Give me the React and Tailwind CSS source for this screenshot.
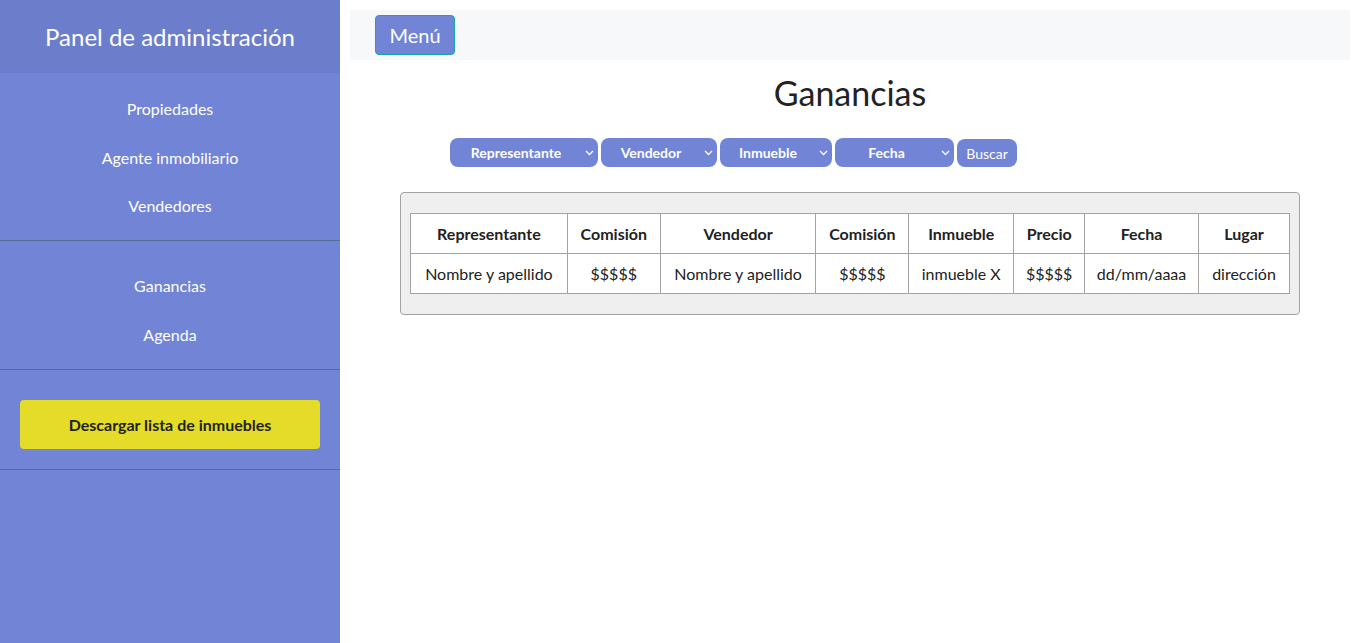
import React from "react";

const navTop = ["Propiedades", "Agente inmobiliario", "Vendedores"];
const navBottom = ["Ganancias", "Agenda"];

const filters = [
  { label: "Representante", w: "w-[148px]" },
  { label: "Vendedor", w: "w-[116px]" },
  { label: "Inmueble", w: "w-[112px]" },
  { label: "Fecha", w: "w-[119px]" },
];

const cols = [
  { head: "Representante", val: "Nombre y apellido", w: "w-[157px]" },
  { head: "Comisión", val: "$$$$$", w: "w-[93px]" },
  { head: "Vendedor", val: "Nombre y apellido", w: "w-[156px]" },
  { head: "Comisión", val: "$$$$$", w: "w-[93px]" },
  { head: "Inmueble", val: "inmueble X", w: "w-[105px]" },
  { head: "Precio", val: "$$$$$", w: "w-[71px]" },
  { head: "Fecha", val: "dd/mm/aaaa", w: "w-[114px]" },
  { head: "Lugar", val: "dirección", w: "w-[91px]" },
];

const Chevron = () => (
  <svg width="9" height="6" viewBox="0 0 9 6" fill="none" stroke="white" strokeWidth="1.3">
    <path d="M1 1l3.5 3.5L8 1" />
  </svg>
);

const App = () => {
  return (
    <div className="flex min-h-[643px] bg-white font-['Lato',sans-serif]">
      {/* Sidebar */}
      <aside className="w-[340px] shrink-0 bg-[#7184d6] text-white">
        <div className="h-[73px] bg-[#6c7ecb] flex items-center justify-center">
          <h1 className="text-[24px] leading-none">Panel de administración</h1>
        </div>
        <nav className="pt-[26px] pb-[24px] flex flex-col items-center gap-[28.5px] text-[16px] leading-[20px]">
          {navTop.map((n) => (
            <a key={n}>{n}</a>
          ))}
        </nav>
        <div className="h-px bg-[#4f7094]" />
        <nav className="pt-[35px] pb-[24px] flex flex-col items-center gap-[29px] text-[16px] leading-[20px]">
          {navBottom.map((n) => (
            <a key={n}>{n}</a>
          ))}
        </nav>
        <div className="h-px bg-[#4f7094]" />
        <div className="px-[20px] pt-[30px] pb-[20px]">
          <button className="w-full h-[49px] rounded-[4px] bg-[#e5dc2a] text-[#222222] font-bold text-[16px]">
            Descargar lista de inmuebles
          </button>
        </div>
        <div className="h-px bg-[#4f7094]" />
      </aside>

      {/* Main */}
      <main className="flex-1 pt-[10px] pr-[10px] pl-[10px]">
        <div className="h-[50px] bg-[#f7f8fa] flex items-center pl-[25px]">
          <button className="h-[40px] w-[80px] rounded-[4px] bg-[#7184d6] border border-[#17a2b8] text-white text-[20px]">
            Menú
          </button>
        </div>
        <h2 className="text-center text-[34px] leading-none text-[#222222] mt-[16px]">Ganancias</h2>
        <div className="flex gap-[3px] pl-[100px] mt-[28px]">
          {filters.map((f) => (
            <div
              key={f.label}
              className={`${f.w} h-[29px] rounded-[8px] bg-[#7184d6] text-white font-bold text-[14px] flex items-center pl-[8px] pr-[4px]`}
            >
              <span className="flex-1 text-center mr-[11px]">{f.label}</span>
              <Chevron />
            </div>
          ))}
          <div className="w-[60px] h-[28px] mt-[1px] rounded-[8px] bg-[#7184d6] text-white text-[14px] flex items-center justify-center">
            Buscar
          </div>
        </div>
        <div className="mx-[50px] mt-[25px] bg-[#efefef] border border-[#a3a3a3] rounded-[4px] pt-[20px] pb-[20px] px-[9px]">
          <table className="border-collapse bg-white text-[#222222] text-[16px]">
            <thead>
              <tr>
                {cols.map((c, i) => (
                  <th key={i} className={`${c.w} h-[40px] border border-[#a3a3a3] font-bold text-center`}>
                    {c.head}
                  </th>
                ))}
              </tr>
            </thead>
            <tbody>
              <tr>
                {cols.map((c, i) => (
                  <td key={i} className="h-[40px] border border-[#a3a3a3] text-center">
                    {c.val}
                  </td>
                ))}
              </tr>
            </tbody>
          </table>
        </div>
      </main>
    </div>
  );
};

export default App;
